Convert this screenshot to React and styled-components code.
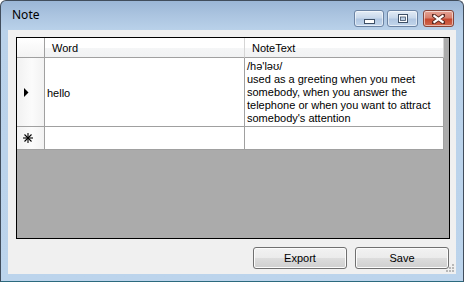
import styled, { createGlobalStyle } from "styled-components";

const GlobalStyle = createGlobalStyle`
  html, body {
    margin: 0;
    padding: 0;
    background: #ffffff;
  }
  * {
    box-sizing: border-box;
  }
`;

const noteText = [
  "/hə'ləʊ/",
  "used as a greeting when you meet somebody, when you answer the telephone or when you want to attract somebody's attention",
];

const Window = styled.div`
  width: 464px;
  height: 282px;
  border: 1px solid #414d5c;
  border-bottom-color: #2c6a7e;
  border-radius: 6px 6px 0 0;
  background: linear-gradient(to bottom, #9bb6d6 0px, #abc4e0 14px, #bad2ea 30px, #bcd4ec 100%);
  display: flex;
  flex-direction: column;
  font-family: "Liberation Sans", Arial, sans-serif;
`;

const TitleBar = styled.div`
  height: 29px;
  display: flex;
  align-items: center;
  padding: 0 9px 2px 11px;
`;

const Title = styled.div`
  flex: 1;
  font-family: "Noto Sans", "Open Sans", sans-serif;
  font-size: 12px;
  color: #000;
`;

const Caption = styled.div`
  display: flex;
  gap: 3px;
  align-self: flex-start;
  margin-top: 9px;
`;

const CaptionButton = styled.div`
  width: ${(p) => p.$w}px;
  height: 17px;
  border: 1px solid ${(p) => (p.$close ? "#86453a" : "#6c84a4")};
  border-radius: 3px;
  display: flex;
  align-items: center;
  justify-content: center;
  margin-left: ${(p) => (p.$close ? 2 : 0)}px;
  background: ${(p) =>
    p.$close
      ? "linear-gradient(to bottom, #e5a394 0%, #d8806d 45%, #c6482f 55%, #d0694f 100%)"
      : "linear-gradient(to bottom, #e3ecf6 0%, #c9d9ec 45%, #b1c7e2 55%, #c3d6ec 100%)"};
  box-shadow: inset 0 0 0 1px rgba(255, 255, 255, 0.55);
`;

const Client = styled.div`
  flex: 1;
  margin: 0 7px 7px 7px;
  background: #f0f0f0;
  display: flex;
  flex-direction: column;
  padding: 7px 6px 5px 8px;
  position: relative;
`;

const Grid = styled.div`
  height: 202px;
  border: 1px solid #000;
  background: #ababab;
  font-size: 11px;
  color: #000;
`;

const Row = styled.div`
  display: flex;
  height: ${(p) => p.$h}px;
`;

const RowHead = styled.div`
  width: 28px;
  flex: none;
  border-right: 1px solid #a0a0a0;
  border-bottom: 1px solid #a0a0a0;
  background: ${(p) =>
    p.$corner
      ? "linear-gradient(to bottom, #ffffff, #f3f3f3)"
      : "linear-gradient(to right, #f1f1f1 0%, #fbfbfb 55%, #f2f2f2 100%)"};
  display: flex;
  align-items: center;
  padding-left: ${(p) => p.$pad || 0}px;
`;

const HeadCell = styled.div`
  width: ${(p) => p.$w}px;
  flex: none;
  border-right: 1px solid #d5d5d5;
  border-bottom: 1px solid #a0a0a0;
  background: linear-gradient(to bottom, #ffffff 0%, #ffffff 50%, #f5f6f7 51%, #f1f2f3 100%);
  padding: 1px 7px 0;
  display: flex;
  align-items: center;
`;

const Cell = styled.div`
  width: ${(p) => p.$w}px;
  flex: none;
  border-right: 1px solid #a0a0a0;
  border-bottom: 1px solid #a0a0a0;
  background: #fff;
  padding: 2px 2px 0 2px;
  line-height: 13px;
  display: flex;
  flex-direction: column;
  justify-content: ${(p) => (p.$center ? "center" : "flex-start")};
`;

const Buttons = styled.div`
  margin-top: 8px;
  display: flex;
  justify-content: flex-end;
  gap: 8px;
  padding-right: 1px;
`;

const Button = styled.div`
  width: 94px;
  height: 22px;
  border: 1px solid #707070;
  border-radius: 3px;
  background: linear-gradient(to bottom, #f2f2f2 0%, #ebebeb 50%, #dddddd 51%, #cfcfcf 100%);
  box-shadow: inset 0 0 0 1px #fcfcfc;
  font-size: 11px;
  color: #000;
  display: flex;
  align-items: center;
  justify-content: center;
`;

const Grip = styled.svg`
  position: absolute;
  right: 1px;
  bottom: 1px;
`;

const Arrow = () => (
  <svg width="5" height="9" viewBox="0 0 5 9">
    <path d="M0 0 L4.5 4.5 L0 9 Z" fill="#000" />
  </svg>
);

const Star = () => (
  <svg width="10" height="10" viewBox="0 0 10 10">
    <g stroke="#000" strokeWidth="1.1">
      <line x1="5" y1="0" x2="5" y2="10" />
      <line x1="0" y1="5" x2="10" y2="5" />
      <line x1="1.5" y1="1.5" x2="8.5" y2="8.5" />
      <line x1="8.5" y1="1.5" x2="1.5" y2="8.5" />
    </g>
  </svg>
);

const App = () => {
  return (
    <>
      <GlobalStyle />
      <Window>
        <TitleBar>
          <Title>Note</Title>
          <Caption>
            <CaptionButton $w={30}>
              <svg width="11" height="5" viewBox="0 0 11 5" style={{ marginTop: 5 }}>
                <rect x="0.5" y="0.5" width="10" height="4" fill="#fff" stroke="#3d4f66" />
              </svg>
            </CaptionButton>
            <CaptionButton $w={31}>
              <svg width="10" height="9" viewBox="0 0 10 9">
                <rect x="0.5" y="0.5" width="9" height="8" fill="#fff" stroke="#3d4f66" />
                <rect x="2.5" y="3" width="5" height="3.5" fill="#bcd0e6" stroke="#3d4f66" strokeWidth="0.8" />
              </svg>
            </CaptionButton>
            <CaptionButton $w={31} $close>
              <svg width="13" height="10" viewBox="0 0 13 10">
                <path
                  d="M1 1 L12 9 M12 1 L1 9"
                  stroke="#5a2a22"
                  strokeWidth="4"
                  strokeLinecap="round"
                />
                <path d="M1.5 1.3 L11.5 8.7 M11.5 1.3 L1.5 8.7" stroke="#fff" strokeWidth="2.2" />
              </svg>
            </CaptionButton>
          </Caption>
        </TitleBar>
        <Client>
          <Grid>
            <Row $h={20}>
              <RowHead $corner />
              <HeadCell $w={200}>Word</HeadCell>
              <HeadCell $w={199}>NoteText</HeadCell>
            </Row>
            <Row $h={69}>
              <RowHead $pad={7}>
                <Arrow />
              </RowHead>
              <Cell $w={200} $center>
                hello
              </Cell>
              <Cell $w={199}>
                {noteText.map((line) => (
                  <span key={line}>{line}</span>
                ))}
              </Cell>
            </Row>
            <Row $h={23}>
              <RowHead $pad={6}>
                <Star />
              </RowHead>
              <Cell $w={200} />
              <Cell $w={199} />
            </Row>
          </Grid>
          <Buttons>
            <Button>Export</Button>
            <Button>Save</Button>
          </Buttons>
          <Grip width="10" height="10" viewBox="0 0 10 10">
            <g fill="#b8b8b8">
              <rect x="7" y="1" width="2" height="2" />
              <rect x="4" y="4" width="2" height="2" />
              <rect x="7" y="4" width="2" height="2" />
              <rect x="1" y="7" width="2" height="2" />
              <rect x="4" y="7" width="2" height="2" />
              <rect x="7" y="7" width="2" height="2" />
            </g>
          </Grip>
        </Client>
      </Window>
    </>
  );
};

export default App;
